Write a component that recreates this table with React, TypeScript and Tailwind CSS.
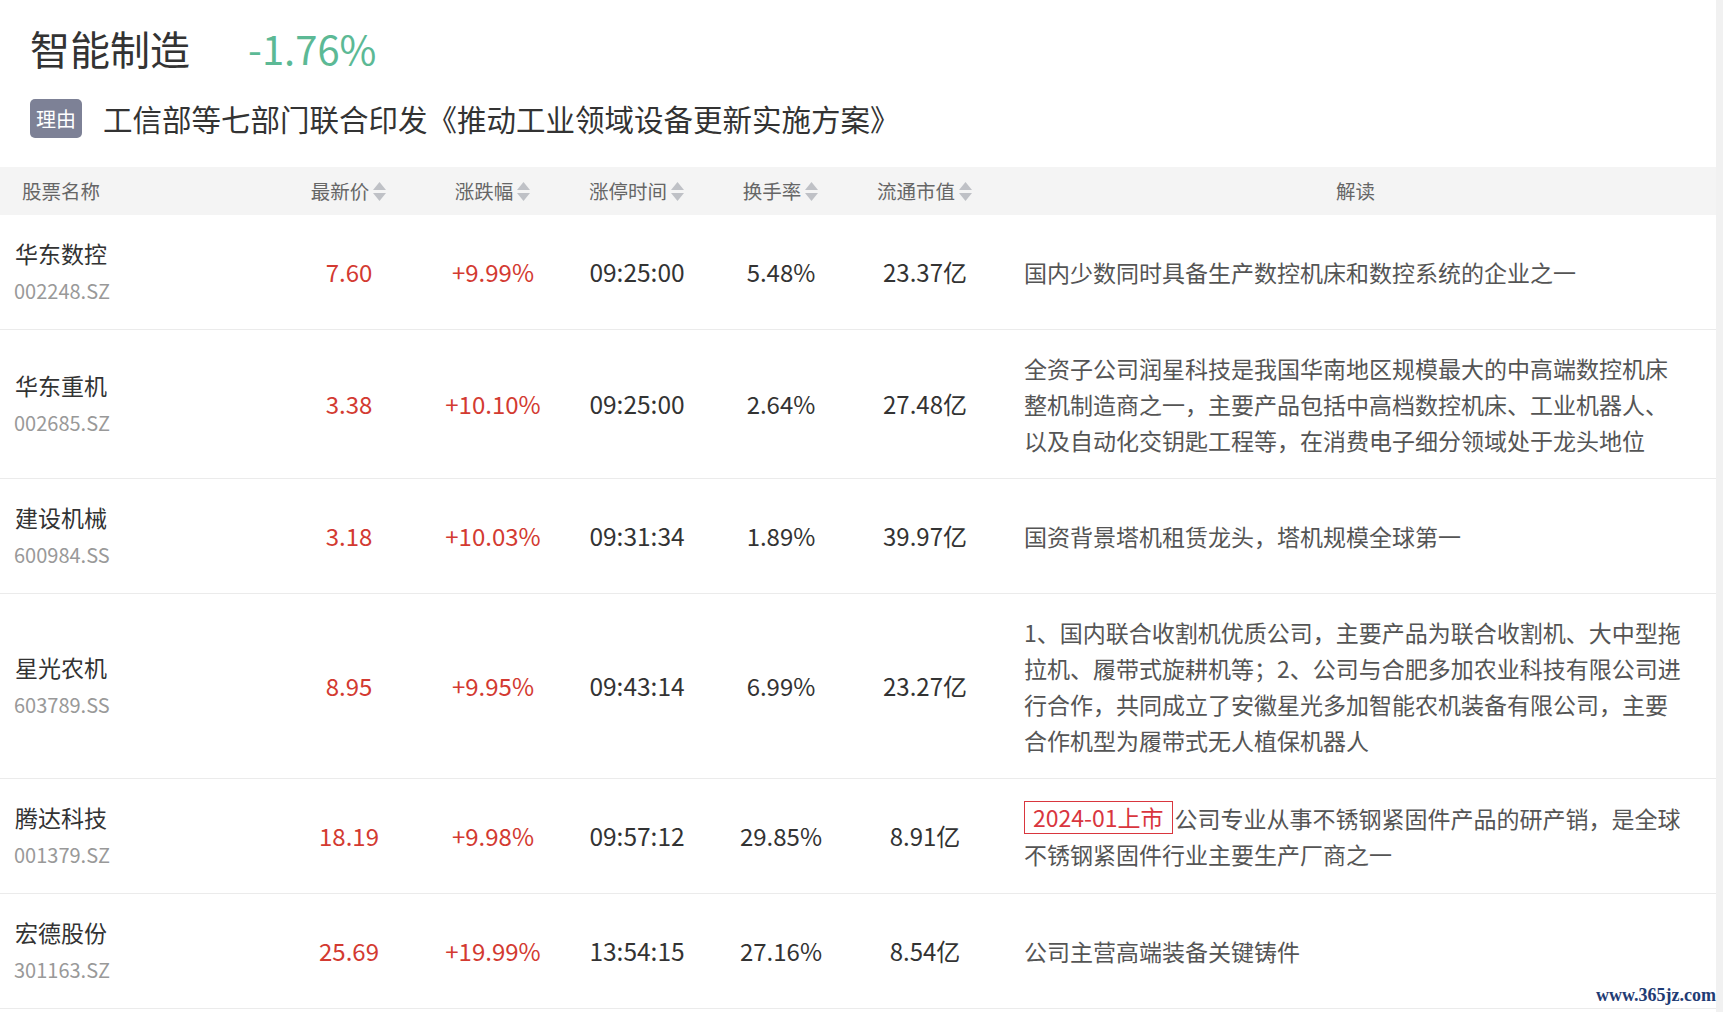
import React from "react";

type Stock = {
  name: string;
  code: string;
  price: string;
  change: string;
  time: string;
  turnover: string;
  cap: string;
  listed?: string;
  desc: string;
};

const stocks: Stock[] = [
  {
    name: "华东数控",
    code: "002248.SZ",
    price: "7.60",
    change: "+9.99%",
    time: "09:25:00",
    turnover: "5.48%",
    cap: "23.37亿",
    desc: "国内少数同时具备生产数控机床和数控系统的企业之一",
  },
  {
    name: "华东重机",
    code: "002685.SZ",
    price: "3.38",
    change: "+10.10%",
    time: "09:25:00",
    turnover: "2.64%",
    cap: "27.48亿",
    desc: "全资子公司润星科技是我国华南地区规模最大的中高端数控机床整机制造商之一，主要产品包括中高档数控机床、工业机器人、以及自动化交钥匙工程等，在消费电子细分领域处于龙头地位",
  },
  {
    name: "建设机械",
    code: "600984.SS",
    price: "3.18",
    change: "+10.03%",
    time: "09:31:34",
    turnover: "1.89%",
    cap: "39.97亿",
    desc: "国资背景塔机租赁龙头，塔机规模全球第一",
  },
  {
    name: "星光农机",
    code: "603789.SS",
    price: "8.95",
    change: "+9.95%",
    time: "09:43:14",
    turnover: "6.99%",
    cap: "23.27亿",
    desc: "1、国内联合收割机优质公司，主要产品为联合收割机、大中型拖拉机、履带式旋耕机等；2、公司与合肥多加农业科技有限公司进行合作，共同成立了安徽星光多加智能农机装备有限公司，主要合作机型为履带式无人植保机器人",
  },
  {
    name: "腾达科技",
    code: "001379.SZ",
    price: "18.19",
    change: "+9.98%",
    time: "09:57:12",
    turnover: "29.85%",
    cap: "8.91亿",
    listed: "2024-01上市",
    desc: "公司专业从事不锈钢紧固件产品的研产销，是全球不锈钢紧固件行业主要生产厂商之一",
  },
  {
    name: "宏德股份",
    code: "301163.SZ",
    price: "25.69",
    change: "+19.99%",
    time: "13:54:15",
    turnover: "27.16%",
    cap: "8.54亿",
    desc: "公司主营高端装备关键铸件",
  },
];

const cols = "grid grid-cols-[277px_144px_144px_144px_144px_144px_1fr]";

const SortIcon = () => (
  <svg width="15" height="21" viewBox="0 0 15 21" className="ml-[3px] shrink-0">
    <path d="M7.5 1 L14 9 L1 9 Z" fill="#bfc1c6" />
    <path d="M1 12 L14 12 L7.5 20 Z" fill="#bfc1c6" />
  </svg>
);

const SortHead = ({ label }: { label: string }) => (
  <div className="flex items-center justify-center">
    <span>{label}</span>
    <SortIcon />
  </div>
);

export default function App() {
  return (
    <div
      className="relative flex w-[1723px] min-h-[1012px] bg-white text-[#333]"
      style={{ fontFamily: '"Noto Sans CJK SC", "Noto Sans", sans-serif' }}
    >
      <div className="w-[1716px]">
        <div className="pl-[30px] pt-[24px] flex items-center h-[72px]">
          <span className="text-[40px] leading-[48px]">智能制造</span>
          <span className="ml-[58px] text-[40px] leading-[48px] text-[#5cb995]">
            -1.76%
          </span>
        </div>
        <div className="flex items-center pl-[30px] mt-[27px] h-[39px]">
          <span className="flex items-center justify-center w-[52px] h-[39px] rounded-[5px] bg-[#7d8196] text-white text-[20px]">
            理由
          </span>
          <span className="ml-[21px] text-[29.5px] leading-[39px] text-[#333]">
            工信部等七部门联合印发《推动工业领域设备更新实施方案》
          </span>
        </div>

        <div
          className={`${cols} mt-[29px] h-[48px] items-center bg-[#f4f4f4] text-[19.5px] text-[#666]`}
        >
          <div className="pl-[22px]">股票名称</div>
          <SortHead label="最新价" />
          <SortHead label="涨跌幅" />
          <SortHead label="涨停时间" />
          <SortHead label="换手率" />
          <SortHead label="流通市值" />
          <div className="text-center pr-[2px]">解读</div>
        </div>

        {stocks.map((s) => (
          <div
            key={s.code}
            className={`${cols} items-center border-b border-[#ebebeb] py-5`}
          >
            <div className="pl-[15px]">
              <div className="text-[23px] leading-[37px] text-[#333]">{s.name}</div>
              <div className="-ml-[1px] text-[20px] leading-[37px] text-[#999]">{s.code}</div>
            </div>
            <div className="text-center text-[24px] text-[#d33a31]">{s.price}</div>
            <div className="text-center text-[24px] text-[#d33a31]">{s.change}</div>
            <div className="text-center text-[24.5px]">{s.time}</div>
            <div className="text-center text-[24px]">{s.turnover}</div>
            <div className="text-center text-[24px]">{s.cap}</div>
            <div className="pl-[27px] pr-[30px] text-[23px] leading-[36px] text-[#555]">
              {s.listed && (
                <span className="inline-block mr-[2px] px-[8px] border border-[#d9363e] text-[#d9363e] leading-[31px] align-top mt-[1px]">
                  {s.listed}
                </span>
              )}
              {s.desc}
            </div>
          </div>
        ))}
      </div>
      <div className="w-[7px] bg-[#f1f1f1]" />

      <div
        className="absolute right-[7px] top-[982px] text-[18px] font-bold text-[#1f3c74]"
        style={{ fontFamily: '"Liberation Serif", serif' }}
      >
        www.365jz.com
      </div>
    </div>
  );
}
